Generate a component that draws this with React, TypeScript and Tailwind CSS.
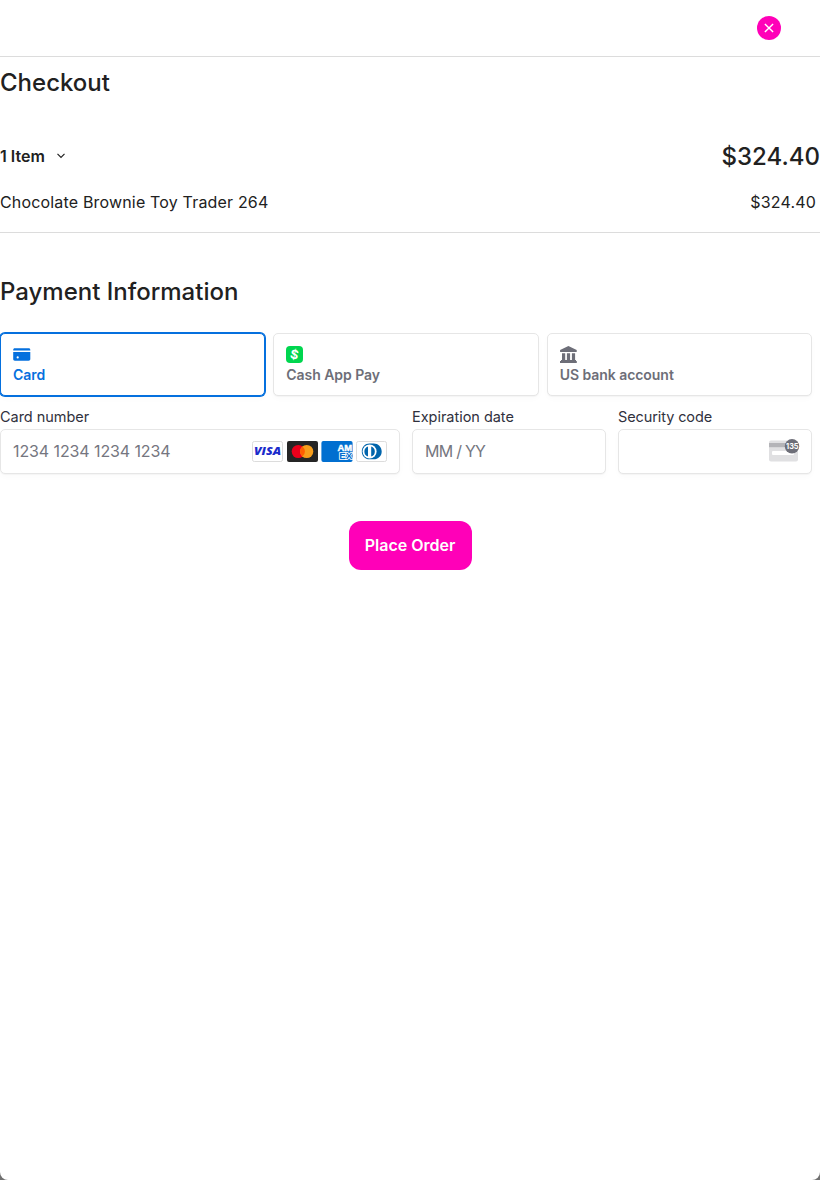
import React from "react";

function CardBrands() {
  return (
    <div className="-mt-px flex gap-[3.6px]">
      <svg width="31" height="21" viewBox="0 0 31 21">
        <rect x=".5" y=".5" width="30" height="20" rx="1.8" fill="#fff" stroke="#dcdcdc" />
        <text x="2" y="14.4" textLength="27" lengthAdjust="spacingAndGlyphs" fontFamily="Open Sans, sans-serif" fontWeight="800" fontStyle="italic" fontSize="11" fill="#1a2bcb">VISA</text>
      </svg>
      <svg width="31" height="21" viewBox="0 0 31 21">
        <rect width="31" height="21" rx="2" fill="#252525" />
        <circle cx="11.3" cy="10.5" r="6.6" fill="#eb001b" />
        <circle cx="19.7" cy="10.5" r="6.6" fill="#f79e1b" />
        <path d="M15.5 5.4a6.6 6.6 0 0 1 0 10.2a6.6 6.6 0 0 1 0-10.2Z" fill="#ff5f00" />
      </svg>
      <svg width="32" height="21" viewBox="0 0 32 21" className="-mr-px">
        <rect x=".4" width="31.2" height="21" rx="2" fill="#016fd0" />
        <g fontFamily="Liberation Sans, sans-serif" fontWeight="700" fontSize="8.5" fill="#016fd0" stroke="#fff" strokeWidth="1.5" paintOrder="stroke">
          <text x="16.5" y="9.8" textLength="14.6" lengthAdjust="spacingAndGlyphs" fill="#fff" strokeWidth=".4">AM</text>
          <text x="18.3" y="17.8" textLength="13" lengthAdjust="spacingAndGlyphs">EX</text>
        </g>
      </svg>
      <svg width="31" height="21" viewBox="0 0 31 21">
        <rect x=".5" y=".5" width="30" height="20" rx="1.8" fill="#fff" stroke="#dcdcdc" />
        <path d="M13.5 2.6h4.2c4.4 0 8 3.3 8 7.9s-3.6 7.8-8 7.8h-4.2c-4.4 0-7.7-3.3-7.7-7.8s3.3-7.9 7.7-7.9Z" fill="#0165ac" />
        <circle cx="13.6" cy="10.5" r="7" fill="#fff" />
        <path d="M12 5.4v10.2a5.4 5.4 0 0 1 0-10.2ZM15.2 5.4v10.2a5.4 5.4 0 0 0 0-10.2Z" fill="#0165ac" />
      </svg>
    </div>
  );
}

function SecurityIcon() {
  return (
    <svg width="32" height="24" viewBox="0 0 32 24" className="-mt-[3px]">
      <rect x="1" y="2.5" width="29" height="21" rx="2" fill="#e0e0e2" />
      <path d="M1 5h29v4.2H1Z" fill="#b4b4b8" />
      <rect x="4" y="13" width="22" height="4" rx="1" fill="#fff" />
      <circle cx="24" cy="8.3" r="7.2" fill="#6d6e78" />
      <text x="18" y="11" textLength="12.5" lengthAdjust="spacingAndGlyphs" fontFamily="Inter, sans-serif" fontWeight="700" fontSize="7.6" fill="#fff">135</text>
    </svg>
  );
}

const tab = "flex h-[63px] flex-1 flex-col rounded-[5px] bg-white pl-3 pt-3 text-left text-[14px] font-semibold leading-[16px] tracking-[-0.05px] shadow-[0_1px_1px_rgba(0,0,0,0.03),0_3px_6px_rgba(0,0,0,0.02)]";
const field = "mt-[3px] flex h-[45px] items-center rounded-[5px] border border-[#e6e6e6] bg-white px-3 text-[16px] text-[#757680] shadow-[0_1px_1px_rgba(0,0,0,0.03),0_3px_6px_rgba(0,0,0,0.02)]";

export default function App() {
  return (
    <div className="h-[1180px] overflow-hidden bg-[#707070] font-['Inter',sans-serif] text-[#212121]">
      <main className="h-full rounded-b-[8px] bg-white">
        <header className="flex h-[57px] justify-end border-b border-[#dcdcdc] pr-[39px] pt-4">
          <button aria-label="Close" className="flex size-6 items-center justify-center rounded-full bg-[#ff00b8]">
            <svg width="10" height="10" viewBox="0 0 10 10" stroke="#fff" strokeWidth="1.4"><path d="m.9.9 8.2 8.2M9.1.9.9 9.1" /></svg>
          </button>
        </header>
        <h1 className="mt-2.5 text-[24px] font-medium leading-8">Checkout</h1>
        <section className="mt-[39px] h-[95px] border-b border-[#dcdcdc]">
          <div className="flex h-9 items-center justify-between">
            <div className="flex items-center text-[16px] font-semibold">1 Item
              <svg className="ml-3" width="9" height="6" viewBox="0 0 9 6" fill="none" stroke="#212121" strokeWidth="1.2"><path d="m.5.9 3.5 3.5L7.5.9" /></svg>
            </div>
            <div className="pt-0.5 text-[24px] font-medium">$324.40</div>
          </div>
          <div className="mt-4 flex justify-between pr-1 text-[16px] leading-6 tracking-[0.17px]"><span>Chocolate Brownie Toy Trader 264</span><span>$324.40</span></div>
        </section>
        <section className="mt-[43px]">
          <h2 className="text-[24px] font-medium leading-8">Payment Information</h2>
          <div className="mt-[25px] mr-2 flex gap-2">
            <button className={`${tab} border border-[#0570de] text-[#0570de] ring-1 ring-[#0570de]`}>
              <svg width="18" height="18" viewBox="0 0 18 18" fill="#0570de"><path d="M.2 4.500v-.6c0-1.100.6-1.700 1.700-1.700h13.700c1.100 0 1.700.6 1.700 1.700v.6ZM.2 6h17.100v7.100c0 1.100-.6 1.700-1.700 1.700H1.900c-1.100 0-1.700-.6-1.700-1.700ZM4.700 12.500a1.100 1.100 0 1 0 0-2.200 1.100 1.100 0 0 0 0 2.200" fillRule="evenodd" /></svg>
              <span className="mt-[3px]">Card</span>
            </button>
            <button className={`${tab} border border-[#e6e6e6] text-[#6d6e78]`}>
              <svg width="18" height="18" viewBox="0 0 18 18"><rect width="17" height="17" rx="4" fill="#00d64f" /><text x="8.5" y="13" textAnchor="middle" transform="rotate(12 8.5 8.5)" fontFamily="Inter, sans-serif" fontWeight="700" fontSize="12.5" fill="#fff">$</text></svg>
              <span className="mt-[3px]">Cash App Pay</span>
            </button>
            <button className={`${tab} border border-[#e6e6e6] text-[#6d6e78]`}>
              <svg width="18" height="18" viewBox="0 0 18 18" fill="#6d6e78"><path d="M8.4 0 16.700 4v2H.1V4ZM2 7.300h3.200v6.600H2ZM6.900 7.300h3.200v6.600H6.900ZM11.900 7.300h3.200v6.600h-3.200ZM1 14h15v1h.8v2H0v-2h1Z" /></svg>
              <span className="mt-[3px]">US bank account</span>
            </button>
          </div>
          <div className="mt-3 mr-2 flex gap-3 text-[14.5px] leading-[18px] tracking-[-0.03px] text-[#30313d]">
            <div className="w-[400px]">
              <div>Card number</div>
              <div className={`${field} justify-between pr-3`}><span className="-mt-px tracking-[-0.1px]">1234 1234 1234 1234</span><CardBrands /></div>
            </div>
            <div className="flex-1"><div>Expiration date</div><div className={field}><span className="-mt-px tracking-[-0.75px]">MM / YY</span></div></div>
            <div className="flex-1"><div className="tracking-[-0.1px]">Security code</div><div className={`${field} justify-end pr-[11px]`}><SecurityIcon /></div></div>
          </div>
        </section>
        <div className="mt-[47px] flex justify-center">
          <button className="h-[49px] w-[123px] rounded-[12px] bg-[#ff00b8] pb-0.5 text-[16px] font-semibold text-white">Place Order</button>
        </div>
      </main>
    </div>
  );
}
